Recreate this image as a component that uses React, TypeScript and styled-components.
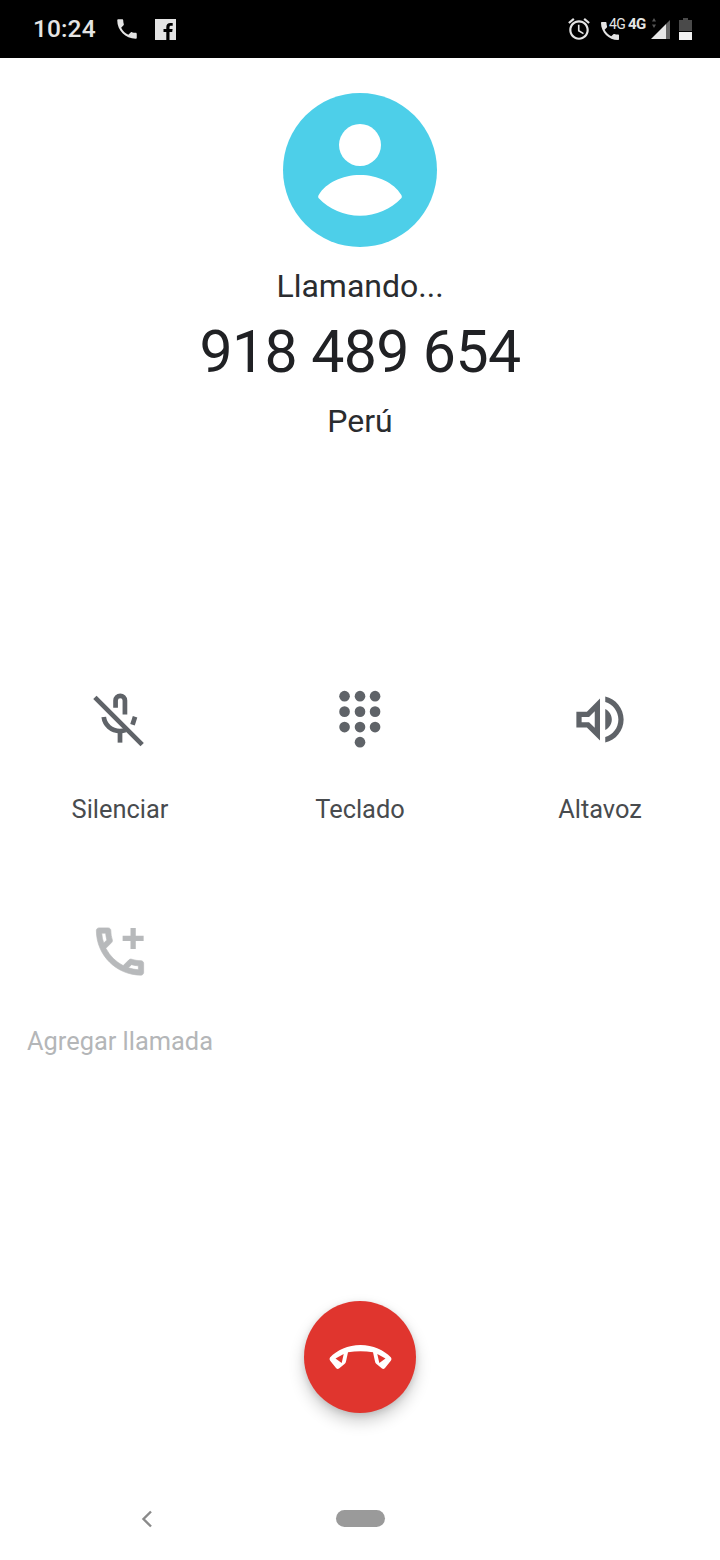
import React from "react";
import styled, { createGlobalStyle } from "styled-components";

const Global = createGlobalStyle`
  html, body { margin: 0; padding: 0; background: #fff; }
  body { font-family: Roboto, "Noto Sans", sans-serif; }
`;

const Screen = styled.div`
  width: 720px;
  height: 1560px;
  display: flex;
  flex-direction: column;
  align-items: center;
  background: #fff;
  overflow: hidden;
`;

const StatusBar = styled.div`
  width: 100%;
  height: 58px;
  flex: none;
  background: #000;
  display: flex;
  align-items: center;
  justify-content: space-between;
  padding: 0 28px 0 33px;
  box-sizing: border-box;
  color: #e4e4e4;
`;

const StatusGroup = styled.div`
  display: flex;
  align-items: center;
`;

const Clock = styled.span`
  font-size: 24.5px;
  font-weight: 500;
  letter-spacing: 0.1px;
  line-height: 58px;
  width: 62px;
  margin-right: 19px;
  white-space: nowrap;
`;

const FbBox = styled.span`
  width: 21px;
  height: 21px;
  margin-left: 15px;
  margin-top: 1px;
  background: #e4e4e4;
  display: block;
`;

const PhoneWithNet = styled.span`
  position: relative;
  width: 30px;
  height: 24px;
  display: block;
  margin-left: 6px;
  margin-top: 4px;
`;

const TinyNet = styled.span<{ $bold?: boolean }>`
  font-size: ${(p) => (p.$bold ? 15 : 14)}px;
  font-weight: ${(p) => (p.$bold ? 700 : 400)};
  letter-spacing: -0.5px;
  line-height: 16px;
  color: #e4e4e4;
`;

const TinyNetOver = styled(TinyNet)`
  position: absolute;
  left: 11px;
  top: -3px;
`;

const BoldNet = styled(TinyNet)`
  width: 18px;
  margin-top: -10px;
  white-space: nowrap;
`;

const ArrowSlot = styled.span`
  display: block;
  width: 6px;
  height: 16px;
  margin-left: 5px;
  margin-right: -7px;
  margin-top: -13px;
`;

const BatterySlot = styled.span`
  display: block;
  width: 13px;
  height: 22px;
  margin-left: 7px;
`;

const Avatar = styled.div`
  width: 154px;
  height: 154px;
  flex: none;
  margin-top: 35px;
  border-radius: 50%;
  background: #4dcfe9;
`;

const StatusLine = styled.div`
  margin-top: 19px;
  font-size: 32px;
  line-height: 40px;
  color: #2a2c2f;
`;

const Number = styled.div`
  margin-top: 10px;
  font-size: 59px;
  line-height: 72px;
  color: #202124;
  letter-spacing: -0.6px;
`;

const Location = styled.div`
  margin-top: 13px;
  font-size: 32px;
  line-height: 40px;
  color: #2a2c2f;
`;

const Actions = styled.div`
  width: 720px;
  margin-top: 247px;
  display: grid;
  grid-template-columns: repeat(3, 240px);
  row-gap: 94px;
`;

const Action = styled.div<{ $disabled?: boolean }>`
  display: flex;
  flex-direction: column;
  align-items: center;
  height: 138px;
  color: ${(p) => (p.$disabled ? "#b7b9bb" : "#5f6368")};
`;

const ActionLabel = styled.span<{ $disabled?: boolean }>`
  margin-top: 41px;
  font-size: 25.4px;
  line-height: 34px;
  white-space: nowrap;
  color: ${(p) => (p.$disabled ? "#b4b6b8" : "#484b4e")};
`;

const EndButton = styled.div`
  width: 112px;
  height: 112px;
  flex: none;
  margin-top: 243px;
  border-radius: 50%;
  background: #e0352e;
  box-shadow: 0 8px 16px rgba(0, 0, 0, 0.2), 0 2px 6px rgba(0, 0, 0, 0.12);
  display: flex;
  align-items: center;
  justify-content: center;
`;

const NavBar = styled.div`
  width: 100%;
  margin-top: 97px;
  height: 17px;
  display: flex;
  align-items: center;
  padding-left: 140px;
  box-sizing: border-box;
`;

const HomePill = styled.div`
  width: 49px;
  height: 17px;
  margin-left: 182px;
  border-radius: 9px;
  background: #9a9a9a;
`;

const callFilled =
  "M20 15.5c-1.25 0-2.45-.2-3.57-.57-.35-.11-.74-.03-1.02.24l-2.2 2.2c-2.83-1.44-5.15-3.75-6.59-6.58l2.2-2.21c.28-.27.36-.66.25-1.01C8.7 6.45 8.5 5.25 8.5 4c0-.55-.45-1-1-1H4c-.55 0-1 .45-1 1 0 9.39 7.61 17 17 17 .55 0 1-.45 1-1v-3.5c0-.55-.45-1-1-1z";
const callOutline =
  "M6.54 5c.06.89.21 1.76.45 2.59l-1.2 1.2c-.41-1.2-.67-2.47-.76-3.79h1.51m9.86 12.02c.85.24 1.72.39 2.6.45v1.49c-1.32-.09-2.59-.35-3.8-.75l1.2-1.19M7.5 3H4c-.55 0-1 .45-1 1 0 9.39 7.61 17 17 17 .55 0 1-.45 1-1v-3.49c0-.55-.45-1-1-1-1.24 0-2.45-.2-3.57-.57-.1-.04-.21-.05-.31-.05-.26 0-.51.1-.71.29l-2.2 2.2c-2.83-1.45-5.15-3.76-6.59-6.59l2.2-2.2c.28-.28.36-.67.25-1.02C8.7 6.45 8.5 5.25 8.5 4c0-.55-.45-1-1-1z";

const CallIcon = ({ size }: { size: number }) => (
  <svg width={size} height={size} viewBox="0 0 24 24" fill="currentColor">
    <path d={callFilled} />
  </svg>
);

const FacebookGlyph = () => (
  <svg width="21" height="21" viewBox="0 0 21 21">
    <path
      d="M14.5 21v-8h2.7l.4-3h-3.1V8.2c0-.9.3-1.5 1.5-1.5h1.7V4c-.3 0-1.3-.1-2.4-.1-2.4 0-4 1.4-4 4.1V10H8.5v3h2.8v8z"
      fill="#000"
    />
  </svg>
);

const AlarmIcon = () => (
  <svg width="26" height="26" viewBox="0 0 24 24" fill="currentColor">
    <path d="M22 5.72l-4.6-3.86-1.29 1.53 4.6 3.86L22 5.72zM7.88 3.39L6.6 1.86 2 5.71l1.29 1.53 4.59-3.85zM12.5 8H11v6l4.75 2.85.75-1.23-4-2.37V8zM12 4c-4.97 0-9 4.03-9 9s4.03 9 9 9 9-4.03 9-9-4.03-9-9-9zm0 16c-3.87 0-7-3.13-7-7s3.13-7 7-7 7 3.13 7 7-3.13 7-7 7z" />
  </svg>
);

const SignalIcon = () => (
  <svg width="22" height="20" viewBox="0 0 22 20">
    <path d="M1 20 L16 5 V20 Z" fill="#e8e8e8" />
    <path d="M16 5 L20 1 V20 H16 Z" fill="#666" />
  </svg>
);

const SignalArrows = () => (
  <svg width="6" height="16" viewBox="0 0 6 16">
    <path d="M3 3 L5 6.5 H1 Z M3 13 L1 9.5 H5 Z" fill="#555" />
  </svg>
);

const BatteryIcon = () => (
  <svg width="13" height="22" viewBox="0 0 13 22">
    <path d="M4 0h5v2h4v11H0V2h4z" fill="#4a4a4a" />
    <rect x="0" y="14" width="13" height="8" fill="#f0f0f0" />
  </svg>
);

const ContactSilhouette = () => (
  <svg width="154" height="154" viewBox="0 0 154 154">
    <circle cx="77" cy="52" r="21" fill="#fff" />
    <path
      d="M35.5 105 C35 104 35 103 36 101.5 C43 90 59 82 77 82 C95 82 111 90 118 101.5 C119 103 119 104 118.5 105 C108 116 93 122.7 77 122.7 C61 122.7 46 116 35.5 105 Z"
      fill="#fff"
    />
  </svg>
);

const MicOffIcon = () => (
  <svg width="64" height="64" viewBox="0 0 64 64" fill="none" stroke="currentColor" strokeWidth="4.8">
    <path d="M6.5 9.5 L54.5 57.5" />
    <path d="M27.5 20 V12.75 a4.75 4.75 0 0 1 9.5 0 V27" />
    <path d="M15.5 29.5 C16.5 37.5 23 43.7 32 43.7 C34 43.7 36 43.4 37.5 42.8" />
    <path d="M32 43.7 V55.5" />
    <path d="M47.3 29.3 L44.7 37.3" />
  </svg>
);

const DialpadIcon = () => (
  <svg width="64" height="64" viewBox="0 0 64 64" fill="currentColor">
    {[8.3, 24, 39.7].map((y) =>
      [16.3, 32, 47.3].map((x) => <circle key={`${x}-${y}`} cx={x} cy={y} r="5.4" />)
    )}
    <circle cx="32" cy="55" r="5.4" />
  </svg>
);

const SpeakerIcon = () => (
  <svg width="64" height="64" viewBox="0 0 24 24" fill="currentColor">
    <path d="M3 9v6h4l5 5V4L7 9H3zm7-.17v6.34L7.83 13H5v-2h2.83L10 8.83zM16.5 12c0-1.77-1.02-3.29-2.5-4.03v8.05c1.48-.73 2.5-2.25 2.5-4.02zM14 3.23v2.06c2.89.86 5 3.54 5 6.71s-2.11 5.85-5 6.71v2.06c4.01-.91 7-4.49 7-8.77 0-4.28-2.99-7.86-7-8.77z" />
  </svg>
);

const AddCallIcon = () => (
  <svg width="64" height="64" viewBox="0 0 24 24" fill="currentColor">
    <path d={callOutline} stroke="currentColor" strokeWidth="0.25" />
    <path d="M21 6h-3V3h-2v3h-3v2h3v3h2V8h3z" />
  </svg>
);

const EndCallIcon = () => (
  <svg width="112" height="112" viewBox="0 0 112 112">
    <path
      fillRule="evenodd"
      fill="#fff"
      d="M26 56.5 Q25 58 26 59.5 L32 67 Q33.5 68.5 35 67.5 L40.5 63 Q41.7 62 42 60.5 L44 51.3 Q56.5 49 69 51.3 L71 60.5 Q71.3 62 72.500 63 L78 67.5 Q79.5 68.5 81 67 L87 59.5 Q88 58 87 56.5 C80 49 69 44 56.5 44 C44 44 33 49 26 56.5 Z M31.5 57.5 L37.7 62 L39.7 53 Z M81.5 57.5 L73.3 53 L75.3 62 Z"
    />
  </svg>
);

const BackChevron = () => (
  <svg width="14" height="18" viewBox="0 0 14 18" fill="none">
    <path d="M11 1.5 L3.5 9 L11 16.5" stroke="#8a8a8a" strokeWidth="2.4" />
  </svg>
);

const actions = [
  { label: "Silenciar", icon: <MicOffIcon /> },
  { label: "Teclado", icon: <DialpadIcon /> },
  { label: "Altavoz", icon: <SpeakerIcon /> },
  { label: "Agregar llamada", icon: <AddCallIcon />, disabled: true },
];

export default function App() {
  return (
    <Screen>
      <Global />
      <StatusBar>
        <StatusGroup>
          <Clock>10:24</Clock>
          <CallIcon size={26} />
          <FbBox>
            <FacebookGlyph />
          </FbBox>
        </StatusGroup>
        <StatusGroup>
          <AlarmIcon />
          <PhoneWithNet>
            <CallIcon size={24} />
            <TinyNetOver>4G</TinyNetOver>
          </PhoneWithNet>
          <BoldNet $bold>4G</BoldNet>
          <ArrowSlot>
            <SignalArrows />
          </ArrowSlot>
          <SignalIcon />
          <BatterySlot>
            <BatteryIcon />
          </BatterySlot>
        </StatusGroup>
      </StatusBar>
      <Avatar>
        <ContactSilhouette />
      </Avatar>
      <StatusLine>Llamando...</StatusLine>
      <Number>918 489 654</Number>
      <Location>Perú</Location>
      <Actions>
        {actions.map((a) => (
          <Action key={a.label} $disabled={a.disabled}>
            {a.icon}
            <ActionLabel $disabled={a.disabled}>{a.label}</ActionLabel>
          </Action>
        ))}
      </Actions>
      <EndButton>
        <EndCallIcon />
      </EndButton>
      <NavBar>
        <BackChevron />
        <HomePill />
      </NavBar>
    </Screen>
  );
}
